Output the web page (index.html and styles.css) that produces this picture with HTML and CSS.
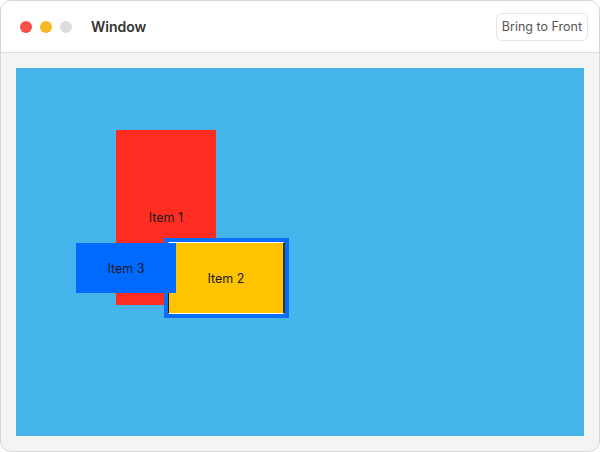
FILE: index.html
```html
<!DOCTYPE html>
<html>
<head>
<meta charset="utf-8">
<link rel="stylesheet" href="styles.css">
</head>
<body>
<div class="window">
  <div class="titlebar">
    <div class="lights">
      <span class="light red"></span>
      <span class="light yellow"></span>
      <span class="light gray"></span>
    </div>
    <div class="title">Window</div>
    <button class="btn">Bring to Front</button>
  </div>
  <div class="content">
    <div class="canvas">
      <div class="item item1">Item 1</div>
      <div class="item item2"><div class="inner">Item 2</div></div>
      <div class="item item3">Item 3</div>
    </div>
  </div>
</div>
</body>
</html>
```
FILE: styles.css
```css
* { box-sizing: border-box; }
html, body { margin: 0; padding: 0; background: #ffffff; }
body { width: 600px; height: 452px; overflow: hidden; font-family: Inter, "Noto Sans", sans-serif; }
.window {
  width: 600px; height: 452px;
  border: 1px solid #d6d6d6;
  border-radius: 11px;
  overflow: hidden;
  display: flex; flex-direction: column;
  background: #f4f4f4;
}
.titlebar {
  height: 52px; flex: none;
  background: #ffffff;
  border-bottom: 1px solid #dcdcdc;
  display: flex; align-items: center;
  padding: 0 11px 0 19px;
}
.lights { display: flex; gap: 8px; }
.light { width: 12px; height: 12px; border-radius: 50%; display: block; }
.red { background: #f5504a; }
.yellow { background: #f8b724; }
.gray { background: #dcdcdc; }
.title { margin-left: 19px; font-size: 14px; font-weight: 600; color: #333333; flex: 1; }
.btn {
  height: 28px; padding: 0 5px;
  border: 1px solid #e6e6e6; border-radius: 6px;
  background: #ffffff; color: #555555;
  font-family: Inter, "Noto Sans", sans-serif; font-size: 12.5px;
}
.content { flex: 1; padding: 15px 15px 15px 15px; }
.canvas { position: relative; width: 568px; height: 368px; background: #45b5ec; }
.item {
  position: absolute;
  display: flex; align-items: center; justify-content: center;
  font-size: 12.5px; color: #1a1a1a;
}
.item1 { left: 100px; top: 62px; width: 100px; height: 175px; background: #ff2d21; }
.item2 { left: 148px; top: 170px; width: 125px; height: 80px; background: #0a6dfb; padding: 4px; }
.item2 .inner {
  width: 100%; height: 100%;
  background: #ffc300;
  border-top: 1px solid #ffffff; border-bottom: 1px solid #ffffff;
  border-left: 1px solid #222222; border-right: 2px solid #333333;
  display: flex; align-items: center; justify-content: center;
}
.item3 { left: 60px; top: 175px; width: 100px; height: 50px; background: #0069fe; }
```
